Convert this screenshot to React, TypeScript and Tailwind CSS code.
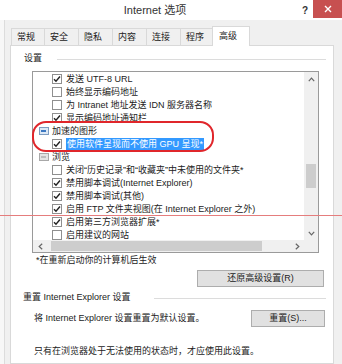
import React from 'react'

type Row =
  | { kind: 'check'; text: string; checked: boolean; selected?: boolean }
  | { kind: 'group'; text: string; active?: boolean }

const rows: Row[] = [
  { kind: 'check', text: '发送 UTF-8 URL', checked: true },
  { kind: 'check', text: '始终显示编码地址', checked: false },
  { kind: 'check', text: '为 Intranet 地址发送 IDN 服务器名称', checked: false },
  { kind: 'check', text: '显示编码地址通知栏', checked: true },
  { kind: 'group', text: '加速的图形', active: true },
  { kind: 'check', text: '使用软件呈现而不使用 GPU 呈现*', checked: true, selected: true },
  { kind: 'group', text: '浏览' },
  { kind: 'check', text: '关闭“历史记录”和“收藏夹”中未使用的文件夹*', checked: false },
  { kind: 'check', text: '禁用脚本调试(Internet Explorer)', checked: true },
  { kind: 'check', text: '禁用脚本调试(其他)', checked: true },
  { kind: 'check', text: '启用 FTP 文件夹视图(在 Internet Explorer 之外)', checked: true },
  { kind: 'check', text: '启用第三方浏览器扩展*', checked: true },
  { kind: 'check', text: '启用建议的网站', checked: false },
]

const tabs = ['常规', '安全', '隐私', '内容', '连接', '程序']
const tabWidths = ['w-[34px]', 'w-[35px]', 'w-[35px]', 'w-[35px]', 'w-[35px]', 'w-[33px]']

function Checkbox({ checked }: { checked: boolean }) {
  return (
    <span className="w-[10px] h-[10px] border border-[#8f8f8f] bg-white flex items-center justify-center shrink-0">
      {checked && (
        <svg width="8" height="8" viewBox="0 0 8 8">
          <path d="M1 4.2 L3 6.3 L7 1.5" fill="none" stroke="#222" strokeWidth="1.4" />
        </svg>
      )}
    </span>
  )
}

function GroupIcon({ active }: { active?: boolean }) {
  return (
    <svg width="10" height="8" viewBox="0 0 10 8" className="shrink-0">
      <rect x="0.5" y="0.5" width="9" height="7" fill={active ? '#dce8f5' : '#e4e4e4'} stroke={active ? '#7d9cc0' : '#a8a8a8'} />
      <rect x="2" y="3" width="5" height="2" fill={active ? '#3b78c2' : '#bdbdbd'} />
    </svg>
  )
}

function Button({ label, width }: { label: string; width: string }) {
  return (
    <div className={`${width} h-[17px] border border-[#adadad] bg-[#e1e1e1] flex items-center justify-center text-[9px] text-[#222]`}>
      {label}
    </div>
  )
}

export default function App() {
  return (
    <div
      className="relative w-[342px] h-[364px] overflow-hidden bg-[#f0f0f0] text-[#222]"
      style={{ fontFamily: '"Liberation Sans", "Noto Sans CJK SC", sans-serif' }}
    >
      {/* Title bar */}
      <div className="h-[20px] bg-white flex items-center relative">
        <div className="flex-1 text-center text-[11px] text-[#333] pl-[12px]">Internet 选项</div>
        <div className="w-[14px] text-[10px] font-bold text-[#333] text-center">?</div>
        <div className="w-[29px] h-[18px] self-start ml-[1px] bg-[#c75050] flex items-center justify-center">
          <svg width="8" height="8" viewBox="0 0 8 8">
            <path d="M1 1 L7 7 M7 1 L1 7" stroke="#fff" strokeWidth="1.4" />
          </svg>
        </div>
      </div>

      <div className="flex h-[344px]">
        <div className="w-[5px] border-r border-[#dcdcdc] bg-[#f7f7f7]" />
        <div className="flex-1 pl-[5px] pr-[8px] pt-[5px] flex flex-col">
          {/* Tabs */}
          <div className="flex items-end h-[20px] pl-[1px]">
            {tabs.map((t, i) => (
              <div
                key={t}
                className={`${tabWidths[i]} h-[17px] border border-[#d9d9d9] border-b-0 -ml-px first:ml-0 bg-[#f0f0f0] text-[9px] leading-[16px] pl-[5px]`}
              >
                {t}
              </div>
            ))}
            <div className="w-[38px] h-[20px] -ml-px border border-[#d9d9d9] border-b-0 bg-white text-[9px] leading-[18px] pl-[6px] relative z-10 -mb-px">
              高级
            </div>
          </div>

          {/* Panel */}
          <div className="flex-1 border border-[#d9d9d9] bg-white flex flex-col text-[9px]">
            <div className="mt-[6px] h-[13px] flex items-center pl-[13px] pr-[7px]">
              <span>设置</span>
              <div className="flex-1 ml-[15px] h-px bg-[#dcdcdc] mt-[2px]" />
            </div>

            {/* List box */}
            <div className="ml-[21px] mt-[6px] w-[287px] h-[182px] border border-[#9a9a9a] bg-white flex flex-col">
              <div className="flex h-[168px]">
                <div className="flex-1 overflow-hidden">
                  {rows.map((r, i) =>
                    r.kind === 'check' ? (
                      <div key={i} className="h-[13px] flex items-center pl-[19px] gap-[4px] whitespace-nowrap">
                        <Checkbox checked={r.checked} />
                        <span className={r.selected ? 'bg-[#3399ff] text-white px-[1px] leading-[12px]' : 'leading-[12px]'}>
                          {r.text}
                        </span>
                      </div>
                    ) : (
                      <div key={i} className="h-[13px] flex items-center pl-[6px] gap-[3px] whitespace-nowrap">
                        <GroupIcon active={r.active} />
                        <span className="leading-[12px]">{r.text}</span>
                      </div>
                    )
                  )}
                </div>
                {/* vertical scrollbar */}
                <div className="w-[14px] bg-[#f0f0f0] flex flex-col items-center">
                  <svg width="7" height="5" viewBox="0 0 7 5" className="mt-[5px]">
                    <path d="M0.8 4.2 L3.5 1.2 L6.2 4.2" fill="none" stroke="#666" strokeWidth="1.2" />
                  </svg>
                  <div className="mt-[82px] w-[10px] h-[24px] bg-[#cdcdcd]" />
                  <div className="flex-1" />
                  <svg width="7" height="5" viewBox="0 0 7 5" className="mb-[4px]">
                    <path d="M0.8 0.8 L3.5 3.8 L6.2 0.8" fill="none" stroke="#666" strokeWidth="1.2" />
                  </svg>
                </div>
              </div>
              {/* horizontal scrollbar */}
              <div className="flex-1 flex">
                <div className="flex-1 bg-[#f0f0f0] flex items-center">
                  <svg width="5" height="7" viewBox="0 0 5 7" className="ml-[5px]">
                    <path d="M4.2 0.8 L1.2 3.5 L4.2 6.2" fill="none" stroke="#666" strokeWidth="1.2" />
                  </svg>
                  <div className="ml-[8px] w-[211px] h-[10px] bg-[#cdcdcd]" />
                  <div className="flex-1" />
                  <svg width="5" height="7" viewBox="0 0 5 7" className="mr-[4px]">
                    <path d="M0.8 0.8 L3.8 3.5 L0.8 6.2" fill="none" stroke="#666" strokeWidth="1.2" />
                  </svg>
                </div>
                <div className="w-[14px] bg-[#f0f0f0]" />
              </div>
            </div>

            <div className="ml-[25px] mt-[1px] h-[13px] leading-[13px]">*在重新启动你的计算机后生效</div>

            <div className="mt-[3px] flex justify-end pr-[9px]">
              <Button label="还原高级设置(R)" width="w-[127px]" />
            </div>

            <div className="mt-[4px] h-[13px] flex items-center pl-[12px] pr-[7px]">
              <span>重置 Internet Explorer 设置</span>
              <div className="flex-1 ml-[23px] h-px bg-[#dcdcdc] mt-[2px]" />
            </div>

            <div className="mt-[6px] flex items-center pl-[23px] pr-[8px]">
              <span className="flex-1">将 Internet Explorer 设置重置为默认设置。</span>
              <Button label="重置(S)..." width="w-[74px]" />
            </div>

            <div className="mt-[18px] pl-[23px] h-[13px] leading-[13px]">
              只有在浏览器处于无法使用的状态时，才应使用此设置。
            </div>
          </div>
        </div>
      </div>

      {/* annotation overlays */}
      <div className="absolute left-[32px] top-[121px] w-[182px] h-[31px] border-2 border-[#e0262b] rounded-[14px]" />
      <div className="absolute left-0 top-[215px] w-[342px] h-px bg-[#e57d7d]" />
    </div>
  )
}
